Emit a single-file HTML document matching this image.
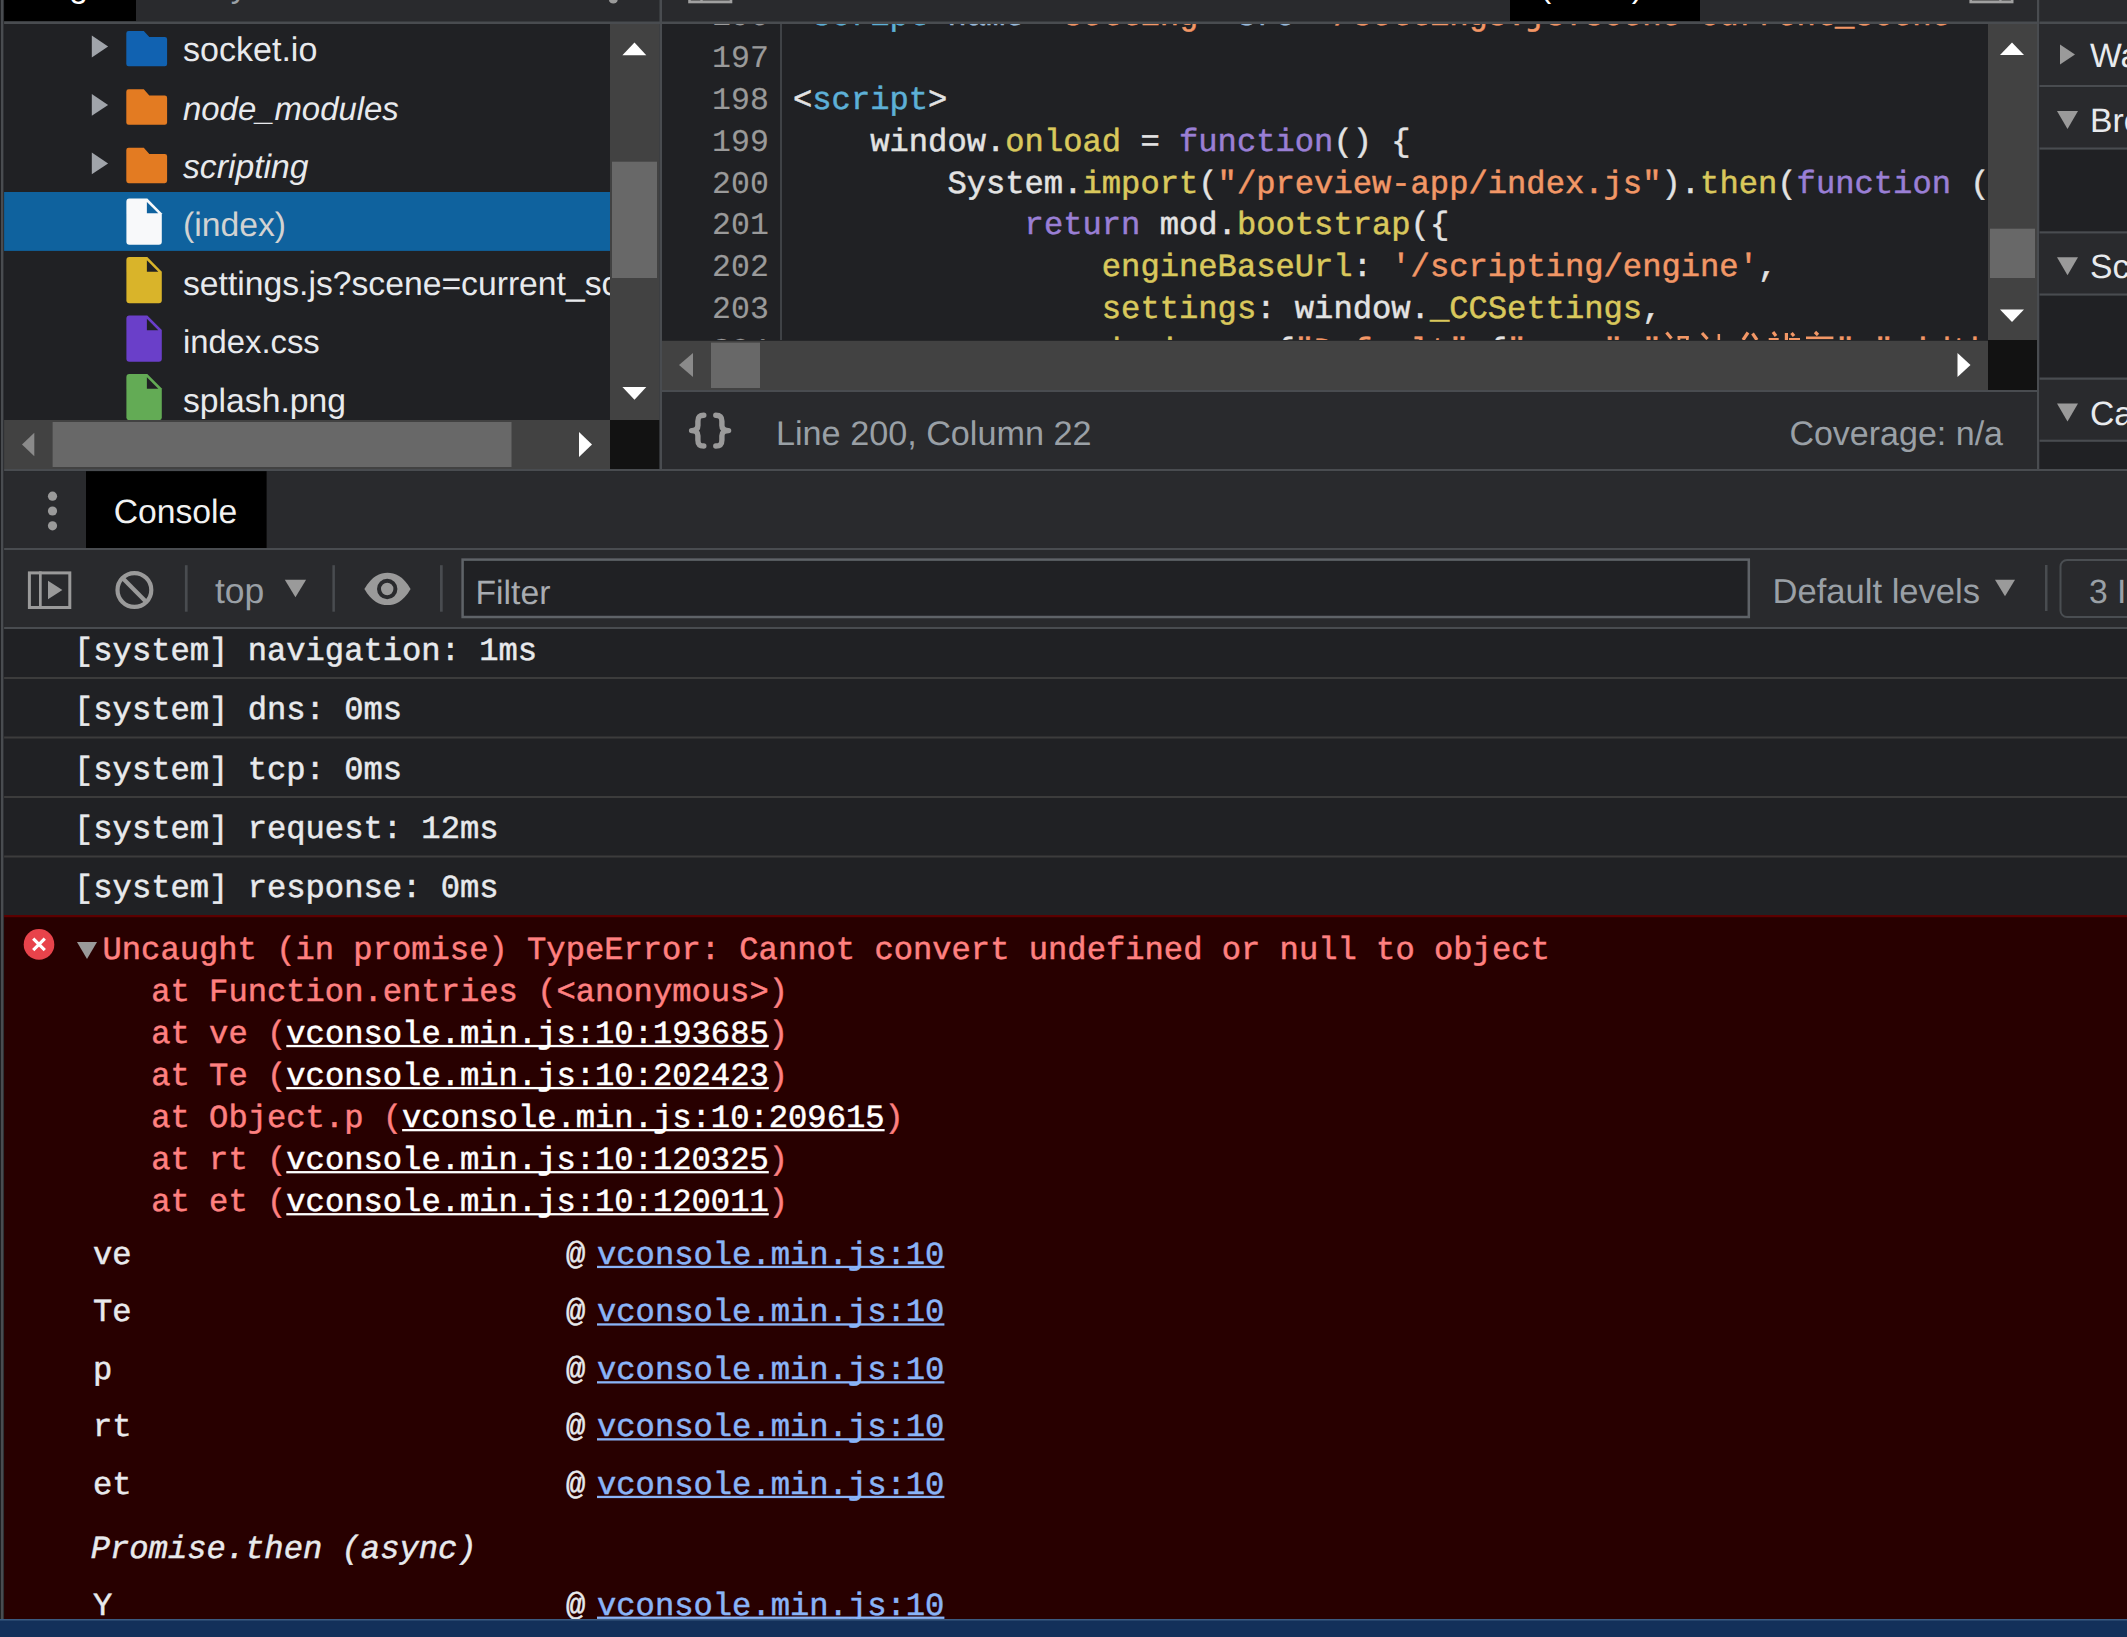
<!DOCTYPE html>
<html><head><meta charset="utf-8"><style>
html,body{margin:0;padding:0;background:#202124;overflow:hidden;width:2127px;height:1637px}
svg{display:block}
text{text-rendering:geometricPrecision}
</style></head><body>
<svg width="2127" height="1637" viewBox="0 0 2127 1637">
<rect x="0.00" y="0.00" width="2127.00" height="1637.00" fill="#202124" />
<rect x="0.00" y="0.00" width="660.00" height="22.00" fill="#292a2d" />
<rect x="4.00" y="0.00" width="132.00" height="21.00" fill="#000" />
<text x="28.00" y="-3.00" fill="#fff" font-family="'Liberation Sans', sans-serif" font-size="33.7" >Page</text>
<text x="159.50" y="-3.00" fill="#9aa0a6" font-family="'Liberation Sans', sans-serif" font-size="33.7" >Filesystem</text>
<circle cx="613.3" cy="-1" r="4.5" fill="#9a9a9a"/>
<rect x="0.00" y="21.50" width="660.00" height="2.50" fill="#494c50" />
<rect x="3.00" y="24.00" width="607.00" height="396.00" fill="#202124" />
<svg x="3" y="24" width="607" height="396" overflow="hidden"><g transform="translate(-3,-24)">
<path d="M91.8,35.60 L91.8,57.40 L108.1,46.50 Z" fill="#a0a4aa" />
<path d="M126.3,33.20 Q126.3,30.90 128.6,30.90 L143.8,30.90 L149.3,37.05 L164.8,37.05 Q167.1,37.05 167.1,39.35 L167.1,63.95 Q167.1,66.25 164.8,66.25 L128.6,66.25 Q126.3,66.25 126.3,63.95 Z" fill="#1162b1" />
<text x="183.00" y="61.05" fill="#e8eaed" font-family="'Liberation Sans', sans-serif" font-size="34.05" >socket.io</text>
<path d="M91.8,94.05 L91.8,115.85 L108.1,104.95 Z" fill="#a0a4aa" />
<path d="M126.3,91.65 Q126.3,89.35 128.6,89.35 L143.8,89.35 L149.3,95.50 L164.8,95.50 Q167.1,95.50 167.1,97.80 L167.1,122.40 Q167.1,124.70 164.8,124.70 L128.6,124.70 Q126.3,124.70 126.3,122.40 Z" fill="#e37b22" />
<text x="183.00" y="119.50" fill="#e8eaed" font-family="'Liberation Sans', sans-serif" font-size="32.9" font-style="italic">node_modules</text>
<path d="M91.8,152.50 L91.8,174.30 L108.1,163.40 Z" fill="#a0a4aa" />
<path d="M126.3,150.10 Q126.3,147.80 128.6,147.80 L143.8,147.80 L149.3,153.95 L164.8,153.95 Q167.1,153.95 167.1,156.25 L167.1,180.85 Q167.1,183.15 164.8,183.15 L128.6,183.15 Q126.3,183.15 126.3,180.85 Z" fill="#e37b22" />
<text x="183.00" y="177.95" fill="#e8eaed" font-family="'Liberation Sans', sans-serif" font-size="33.7" font-style="italic">scripting</text>
<rect x="3.00" y="192.00" width="607.00" height="58.90" fill="#0f629e" />
<path d="M126.4,201.60 Q126.4,198.60 129.4,198.60 L147.3,198.60 L161.8,213.20 L161.8,241.80 Q161.8,244.80 158.8,244.80 L129.4,244.80 Q126.4,244.80 126.4,241.80 Z" fill="#f8f9fa" />
<path d="M146.9,201.90 L146.9,213.30 L158.3,213.30 Z" fill="#0f629e" />
<text x="183.00" y="236.40" fill="#d2d2d2" font-family="'Liberation Sans', sans-serif" font-size="33.7" >(index)</text>
<path d="M126.4,260.05 Q126.4,257.05 129.4,257.05 L147.3,257.05 L161.8,271.65 L161.8,300.25 Q161.8,303.25 158.8,303.25 L129.4,303.25 Q126.4,303.25 126.4,300.25 Z" fill="#d9b42a" />
<path d="M146.9,260.35 L146.9,271.75 L158.3,271.75 Z" fill="#202124" />
<text x="183.00" y="294.85" fill="#e8eaed" font-family="'Liberation Sans', sans-serif" font-size="33.7" >settings.js?scene=current_scene</text>
<path d="M126.4,318.50 Q126.4,315.50 129.4,315.50 L147.3,315.50 L161.8,330.10 L161.8,358.70 Q161.8,361.70 158.8,361.70 L129.4,361.70 Q126.4,361.70 126.4,358.70 Z" fill="#6a3fc9" />
<path d="M146.9,318.80 L146.9,330.20 L158.3,330.20 Z" fill="#202124" />
<text x="183.00" y="353.30" fill="#e8eaed" font-family="'Liberation Sans', sans-serif" font-size="32.8" >index.css</text>
<path d="M126.4,376.95 Q126.4,373.95 129.4,373.95 L147.3,373.95 L161.8,388.55 L161.8,417.15 Q161.8,420.15 158.8,420.15 L129.4,420.15 Q126.4,420.15 126.4,417.15 Z" fill="#63ab55" />
<path d="M146.9,377.25 L146.9,388.65 L158.3,388.65 Z" fill="#202124" />
<text x="183.00" y="411.75" fill="#e8eaed" font-family="'Liberation Sans', sans-serif" font-size="33.7" >splash.png</text>
</g></svg>
<rect x="610.00" y="24.00" width="49.50" height="396.00" fill="#424242" />
<rect x="612.00" y="161.70" width="45.00" height="116.30" fill="#686868" />
<path d="M634.5,42.5 L646.3,55.2 L622.4,55.2 Z" fill="#fff" />
<path d="M622.4,387 L646.3,387 L634.5,399.7 Z" fill="#fff" />
<rect x="3.00" y="420.00" width="607.00" height="49.50" fill="#424242" />
<rect x="52.60" y="422.00" width="458.90" height="45.00" fill="#686868" />
<path d="M34.3,432.7 L34.3,456.2 L22,444.45 Z" fill="#8a8a8a" />
<path d="M579,432 L579,457 L592,444.5 Z" fill="#fff" />
<rect x="610.00" y="420.00" width="49.50" height="49.50" fill="#121212" />
<rect x="659.50" y="0.00" width="2.50" height="469.50" fill="#494c50" />
<rect x="662.00" y="0.00" width="1375.00" height="22.00" fill="#292a2d" />
<rect x="1510.00" y="0.00" width="190.00" height="21.00" fill="#000" />
<text x="1540.00" y="-3.00" fill="#fff" font-family="'Liberation Sans', sans-serif" font-size="33.7" >(index)</text>
<rect x="689.5" y="-20" width="41.5" height="22" fill="#555" stroke="#a0a0a0" stroke-width="2.6"/>
<rect x="700.30" y="-20.00" width="2.40" height="22.00" fill="#a0a0a0" />
<rect x="1970.7" y="-20" width="41.5" height="22" fill="#555" stroke="#a0a0a0" stroke-width="2.6"/>
<rect x="1999.20" y="-20.00" width="2.40" height="22.00" fill="#a0a0a0" />
<rect x="662.00" y="21.50" width="1375.00" height="2.50" fill="#494c50" />
<rect x="662.00" y="24.00" width="1375.00" height="316.00" fill="#202124" />
<rect x="780.00" y="24.00" width="2.00" height="316.00" fill="#3f4246" />
<svg x="662" y="24" width="118" height="316" overflow="hidden"><g transform="translate(-662,-24)">
<text x="768.8" y="25.15" fill="#9a9a9a" stroke="#9a9a9a" stroke-width="0.15" font-family="'Liberation Mono', monospace" font-size="31.5" text-anchor="end">196</text>
<text x="768.8" y="67.00" fill="#9a9a9a" stroke="#9a9a9a" stroke-width="0.15" font-family="'Liberation Mono', monospace" font-size="31.5" text-anchor="end">197</text>
<text x="768.8" y="108.85" fill="#9a9a9a" stroke="#9a9a9a" stroke-width="0.15" font-family="'Liberation Mono', monospace" font-size="31.5" text-anchor="end">198</text>
<text x="768.8" y="150.70" fill="#9a9a9a" stroke="#9a9a9a" stroke-width="0.15" font-family="'Liberation Mono', monospace" font-size="31.5" text-anchor="end">199</text>
<text x="768.8" y="192.55" fill="#9a9a9a" stroke="#9a9a9a" stroke-width="0.15" font-family="'Liberation Mono', monospace" font-size="31.5" text-anchor="end">200</text>
<text x="768.8" y="234.40" fill="#9a9a9a" stroke="#9a9a9a" stroke-width="0.15" font-family="'Liberation Mono', monospace" font-size="31.5" text-anchor="end">201</text>
<text x="768.8" y="276.25" fill="#9a9a9a" stroke="#9a9a9a" stroke-width="0.15" font-family="'Liberation Mono', monospace" font-size="31.5" text-anchor="end">202</text>
<text x="768.8" y="318.10" fill="#9a9a9a" stroke="#9a9a9a" stroke-width="0.15" font-family="'Liberation Mono', monospace" font-size="31.5" text-anchor="end">203</text>
<text x="768.8" y="359.95" fill="#9a9a9a" stroke="#9a9a9a" stroke-width="0.15" font-family="'Liberation Mono', monospace" font-size="31.5" text-anchor="end">204</text>
</g></svg>
<svg x="782" y="24" width="1206" height="316" overflow="hidden"><g transform="translate(-782,-24)">
<text x="793.00" y="25.15" fill="#e3e3e3" stroke="#e3e3e3" stroke-width="0.5" font-family="'Liberation Mono', monospace" font-size="32.17" xml:space="preserve" style="white-space:pre">&lt;</text>
<text x="812.30" y="25.15" fill="#5db0d7" stroke="#5db0d7" stroke-width="0.5" font-family="'Liberation Mono', monospace" font-size="32.17" xml:space="preserve" style="white-space:pre">script</text>
<text x="928.10" y="25.15" fill="#e3e3e3" stroke="#e3e3e3" stroke-width="0.5" font-family="'Liberation Mono', monospace" font-size="32.17" xml:space="preserve" style="white-space:pre">&#160;</text>
<text x="947.40" y="25.15" fill="#9bbbdc" stroke="#9bbbdc" stroke-width="0.5" font-family="'Liberation Mono', monospace" font-size="32.17" xml:space="preserve" style="white-space:pre">name</text>
<text x="1024.60" y="25.15" fill="#e3e3e3" stroke="#e3e3e3" stroke-width="0.5" font-family="'Liberation Mono', monospace" font-size="32.17" xml:space="preserve" style="white-space:pre">=</text>
<text x="1043.90" y="25.15" fill="#f29766" stroke="#f29766" stroke-width="0.5" font-family="'Liberation Mono', monospace" font-size="32.17" xml:space="preserve" style="white-space:pre">"setting"</text>
<text x="1217.60" y="25.15" fill="#e3e3e3" stroke="#e3e3e3" stroke-width="0.5" font-family="'Liberation Mono', monospace" font-size="32.17" xml:space="preserve" style="white-space:pre">&#160;</text>
<text x="1236.90" y="25.15" fill="#9bbbdc" stroke="#9bbbdc" stroke-width="0.5" font-family="'Liberation Mono', monospace" font-size="32.17" xml:space="preserve" style="white-space:pre">src</text>
<text x="1294.80" y="25.15" fill="#e3e3e3" stroke="#e3e3e3" stroke-width="0.5" font-family="'Liberation Mono', monospace" font-size="32.17" xml:space="preserve" style="white-space:pre">=</text>
<text x="1314.10" y="25.15" fill="#f29766" stroke="#f29766" stroke-width="0.5" font-family="'Liberation Mono', monospace" font-size="32.17" xml:space="preserve" style="white-space:pre">"/settings.js?scene=current_scene"</text>
<text x="1970.30" y="25.15" fill="#e3e3e3" stroke="#e3e3e3" stroke-width="0.5" font-family="'Liberation Mono', monospace" font-size="32.17" xml:space="preserve" style="white-space:pre">&gt;&lt;/</text>
<text x="2028.20" y="25.15" fill="#5db0d7" stroke="#5db0d7" stroke-width="0.5" font-family="'Liberation Mono', monospace" font-size="32.17" xml:space="preserve" style="white-space:pre">script</text>
<text x="2144.00" y="25.15" fill="#e3e3e3" stroke="#e3e3e3" stroke-width="0.5" font-family="'Liberation Mono', monospace" font-size="32.17" xml:space="preserve" style="white-space:pre">&gt;</text>
<text x="793.00" y="108.85" fill="#e3e3e3" stroke="#e3e3e3" stroke-width="0.5" font-family="'Liberation Mono', monospace" font-size="32.17" xml:space="preserve" style="white-space:pre">&lt;</text>
<text x="812.30" y="108.85" fill="#5db0d7" stroke="#5db0d7" stroke-width="0.5" font-family="'Liberation Mono', monospace" font-size="32.17" xml:space="preserve" style="white-space:pre">script</text>
<text x="928.10" y="108.85" fill="#e3e3e3" stroke="#e3e3e3" stroke-width="0.5" font-family="'Liberation Mono', monospace" font-size="32.17" xml:space="preserve" style="white-space:pre">&gt;</text>
<text x="793.00" y="150.70" fill="#e3e3e3" stroke="#e3e3e3" stroke-width="0.5" font-family="'Liberation Mono', monospace" font-size="32.17" xml:space="preserve" style="white-space:pre">&#160;&#160;&#160;&#160;window.</text>
<text x="1005.30" y="150.70" fill="#d9c85c" stroke="#d9c85c" stroke-width="0.5" font-family="'Liberation Mono', monospace" font-size="32.17" xml:space="preserve" style="white-space:pre">onload</text>
<text x="1121.10" y="150.70" fill="#e3e3e3" stroke="#e3e3e3" stroke-width="0.5" font-family="'Liberation Mono', monospace" font-size="32.17" xml:space="preserve" style="white-space:pre">&#160;=&#160;</text>
<text x="1179.00" y="150.70" fill="#9a7fd5" stroke="#9a7fd5" stroke-width="0.5" font-family="'Liberation Mono', monospace" font-size="32.17" xml:space="preserve" style="white-space:pre">function</text>
<text x="1333.40" y="150.70" fill="#e3e3e3" stroke="#e3e3e3" stroke-width="0.5" font-family="'Liberation Mono', monospace" font-size="32.17" xml:space="preserve" style="white-space:pre">()&#160;{</text>
<text x="793.00" y="192.55" fill="#e3e3e3" stroke="#e3e3e3" stroke-width="0.5" font-family="'Liberation Mono', monospace" font-size="32.17" xml:space="preserve" style="white-space:pre">&#160;&#160;&#160;&#160;&#160;&#160;&#160;&#160;System.</text>
<text x="1082.50" y="192.55" fill="#d9c85c" stroke="#d9c85c" stroke-width="0.5" font-family="'Liberation Mono', monospace" font-size="32.17" xml:space="preserve" style="white-space:pre">import</text>
<text x="1198.30" y="192.55" fill="#e3e3e3" stroke="#e3e3e3" stroke-width="0.5" font-family="'Liberation Mono', monospace" font-size="32.17" xml:space="preserve" style="white-space:pre">(</text>
<text x="1217.60" y="192.55" fill="#f29766" stroke="#f29766" stroke-width="0.5" font-family="'Liberation Mono', monospace" font-size="32.17" xml:space="preserve" style="white-space:pre">"/preview-app/index.js"</text>
<text x="1661.50" y="192.55" fill="#e3e3e3" stroke="#e3e3e3" stroke-width="0.5" font-family="'Liberation Mono', monospace" font-size="32.17" xml:space="preserve" style="white-space:pre">).</text>
<text x="1700.10" y="192.55" fill="#d9c85c" stroke="#d9c85c" stroke-width="0.5" font-family="'Liberation Mono', monospace" font-size="32.17" xml:space="preserve" style="white-space:pre">then</text>
<text x="1777.30" y="192.55" fill="#e3e3e3" stroke="#e3e3e3" stroke-width="0.5" font-family="'Liberation Mono', monospace" font-size="32.17" xml:space="preserve" style="white-space:pre">(</text>
<text x="1796.60" y="192.55" fill="#9a7fd5" stroke="#9a7fd5" stroke-width="0.5" font-family="'Liberation Mono', monospace" font-size="32.17" xml:space="preserve" style="white-space:pre">function</text>
<text x="1951.00" y="192.55" fill="#e3e3e3" stroke="#e3e3e3" stroke-width="0.5" font-family="'Liberation Mono', monospace" font-size="32.17" xml:space="preserve" style="white-space:pre">&#160;(mod)&#160;{</text>
<text x="793.00" y="234.40" fill="#e3e3e3" stroke="#e3e3e3" stroke-width="0.5" font-family="'Liberation Mono', monospace" font-size="32.17" xml:space="preserve" style="white-space:pre">&#160;&#160;&#160;&#160;&#160;&#160;&#160;&#160;&#160;&#160;&#160;&#160;</text>
<text x="1024.60" y="234.40" fill="#9a7fd5" stroke="#9a7fd5" stroke-width="0.5" font-family="'Liberation Mono', monospace" font-size="32.17" xml:space="preserve" style="white-space:pre">return</text>
<text x="1140.40" y="234.40" fill="#e3e3e3" stroke="#e3e3e3" stroke-width="0.5" font-family="'Liberation Mono', monospace" font-size="32.17" xml:space="preserve" style="white-space:pre">&#160;mod.</text>
<text x="1236.90" y="234.40" fill="#d9c85c" stroke="#d9c85c" stroke-width="0.5" font-family="'Liberation Mono', monospace" font-size="32.17" xml:space="preserve" style="white-space:pre">bootstrap</text>
<text x="1410.60" y="234.40" fill="#e3e3e3" stroke="#e3e3e3" stroke-width="0.5" font-family="'Liberation Mono', monospace" font-size="32.17" xml:space="preserve" style="white-space:pre">({</text>
<text x="793.00" y="276.25" fill="#e3e3e3" stroke="#e3e3e3" stroke-width="0.5" font-family="'Liberation Mono', monospace" font-size="32.17" xml:space="preserve" style="white-space:pre">&#160;&#160;&#160;&#160;&#160;&#160;&#160;&#160;&#160;&#160;&#160;&#160;&#160;&#160;&#160;&#160;</text>
<text x="1101.80" y="276.25" fill="#d9c85c" stroke="#d9c85c" stroke-width="0.5" font-family="'Liberation Mono', monospace" font-size="32.17" xml:space="preserve" style="white-space:pre">engineBaseUrl</text>
<text x="1352.70" y="276.25" fill="#e3e3e3" stroke="#e3e3e3" stroke-width="0.5" font-family="'Liberation Mono', monospace" font-size="32.17" xml:space="preserve" style="white-space:pre">:&#160;</text>
<text x="1391.30" y="276.25" fill="#f29766" stroke="#f29766" stroke-width="0.5" font-family="'Liberation Mono', monospace" font-size="32.17" xml:space="preserve" style="white-space:pre">'/scripting/engine'</text>
<text x="1758.00" y="276.25" fill="#e3e3e3" stroke="#e3e3e3" stroke-width="0.5" font-family="'Liberation Mono', monospace" font-size="32.17" xml:space="preserve" style="white-space:pre">,</text>
<text x="793.00" y="318.10" fill="#e3e3e3" stroke="#e3e3e3" stroke-width="0.5" font-family="'Liberation Mono', monospace" font-size="32.17" xml:space="preserve" style="white-space:pre">&#160;&#160;&#160;&#160;&#160;&#160;&#160;&#160;&#160;&#160;&#160;&#160;&#160;&#160;&#160;&#160;</text>
<text x="1101.80" y="318.10" fill="#d9c85c" stroke="#d9c85c" stroke-width="0.5" font-family="'Liberation Mono', monospace" font-size="32.17" xml:space="preserve" style="white-space:pre">settings</text>
<text x="1256.20" y="318.10" fill="#e3e3e3" stroke="#e3e3e3" stroke-width="0.5" font-family="'Liberation Mono', monospace" font-size="32.17" xml:space="preserve" style="white-space:pre">:&#160;window.</text>
<text x="1429.90" y="318.10" fill="#d9c85c" stroke="#d9c85c" stroke-width="0.5" font-family="'Liberation Mono', monospace" font-size="32.17" xml:space="preserve" style="white-space:pre">_CCSettings</text>
<text x="1642.20" y="318.10" fill="#e3e3e3" stroke="#e3e3e3" stroke-width="0.5" font-family="'Liberation Mono', monospace" font-size="32.17" xml:space="preserve" style="white-space:pre">,</text>
<text x="793.00" y="359.95" fill="#e3e3e3" stroke="#e3e3e3" stroke-width="0.5" font-family="'Liberation Mono', monospace" font-size="32.17" xml:space="preserve" style="white-space:pre">&#160;&#160;&#160;&#160;&#160;&#160;&#160;&#160;&#160;&#160;&#160;&#160;&#160;&#160;&#160;&#160;</text>
<text x="1101.80" y="359.95" fill="#d9c85c" stroke="#d9c85c" stroke-width="0.5" font-family="'Liberation Mono', monospace" font-size="32.17" xml:space="preserve" style="white-space:pre">designs</text>
<text x="1236.90" y="359.95" fill="#e3e3e3" stroke="#e3e3e3" stroke-width="0.5" font-family="'Liberation Mono', monospace" font-size="32.17" xml:space="preserve" style="white-space:pre">:&#160;{</text>
<text x="1294.80" y="359.95" fill="#f29766" stroke="#f29766" stroke-width="0.5" font-family="'Liberation Mono', monospace" font-size="32.17" xml:space="preserve" style="white-space:pre">"Default"</text>
<text x="1468.50" y="359.95" fill="#e3e3e3" stroke="#e3e3e3" stroke-width="0.5" font-family="'Liberation Mono', monospace" font-size="32.17" xml:space="preserve" style="white-space:pre">:{</text>
<text x="1507.10" y="359.95" fill="#f29766" stroke="#f29766" stroke-width="0.5" font-family="'Liberation Mono', monospace" font-size="32.17" xml:space="preserve" style="white-space:pre">"name"</text>
<text x="1622.90" y="359.95" fill="#e3e3e3" stroke="#e3e3e3" stroke-width="0.5" font-family="'Liberation Mono', monospace" font-size="32.17" xml:space="preserve" style="white-space:pre">:</text>
<text x="1642.20" y="359.95" fill="#f29766" stroke="#f29766" stroke-width="0.5" font-family="'Liberation Mono', monospace" font-size="32.17" xml:space="preserve" style="white-space:pre">"</text>
<text x="1835.50" y="359.95" fill="#f29766" stroke="#f29766" stroke-width="0.5" font-family="'Liberation Mono', monospace" font-size="32.17" xml:space="preserve" style="white-space:pre">"</text>
<text x="1854.80" y="359.95" fill="#e3e3e3" stroke="#e3e3e3" stroke-width="0.5" font-family="'Liberation Mono', monospace" font-size="32.17" xml:space="preserve" style="white-space:pre">,</text>
<text x="1874.10" y="359.95" fill="#f29766" stroke="#f29766" stroke-width="0.5" font-family="'Liberation Mono', monospace" font-size="32.17" xml:space="preserve" style="white-space:pre">"width"</text>
<text x="2009.20" y="359.95" fill="#e3e3e3" stroke="#e3e3e3" stroke-width="0.5" font-family="'Liberation Mono', monospace" font-size="32.17" xml:space="preserve" style="white-space:pre">:</text>
<path d="M1666.5,332.5 L1671.5,338.5" stroke="#f29766" stroke-width="3.2" fill="none"/>
<path d="M1702,333 L1707.5,339" stroke="#f29766" stroke-width="3.2" fill="none"/>
<path d="M1748,332.5 L1743,340" stroke="#f29766" stroke-width="3.2" fill="none"/>
<path d="M1752.5,333.5 L1757,340" stroke="#f29766" stroke-width="3.2" fill="none"/>
<path d="M1773,332 L1776,336" stroke="#f29766" stroke-width="3.2" fill="none"/>
<path d="M1791.5,333 L1794,336" stroke="#f29766" stroke-width="3.2" fill="none"/>
<path d="M1815,332 L1818,335" stroke="#f29766" stroke-width="3.2" fill="none"/>
<rect x="1677.7" y="336" width="11" height="2.6" fill="#f29766"/>
<rect x="1677.7" y="336" width="2.6" height="5" fill="#f29766"/>
<rect x="1686" y="336" width="2.6" height="5" fill="#f29766"/>
<rect x="1717.6" y="334" width="2.5" height="6" fill="#f29766"/>
<rect x="1768.7" y="338" width="10" height="2.5" fill="#f29766"/>
<rect x="1784.8" y="333" width="3.2" height="7" fill="#f29766"/>
<rect x="1789" y="338" width="11" height="2.5" fill="#f29766"/>
<rect x="1806" y="336.5" width="27.4" height="2.6" fill="#f29766"/>
</g></svg>
<rect x="1988.00" y="24.00" width="49.00" height="316.00" fill="#424242" />
<rect x="1990.00" y="228.70" width="45.00" height="49.30" fill="#686868" />
<path d="M2012,42.5 L2024,55 L2000,55 Z" fill="#fff" />
<path d="M2000,309.5 L2024,309.5 L2012,322 Z" fill="#fff" />
<rect x="662.00" y="340.80" width="1326.00" height="49.20" fill="#424242" />
<rect x="711.00" y="342.60" width="49.00" height="45.40" fill="#686868" />
<path d="M693,353 L693,377 L679,365 Z" fill="#8a8a8a" />
<path d="M1957.5,353 L1957.5,377 L1970.5,365 Z" fill="#fff" />
<rect x="1988.00" y="340.00" width="49.00" height="50.00" fill="#121212" />
<rect x="662.00" y="390.00" width="1375.00" height="2.00" fill="#494c50" />
<rect x="662.00" y="392.00" width="1375.00" height="77.00" fill="#292a2d" />
<path d="M703.8,415.3 C699.3,415.3 697.9,417.3 697.9,421.3 L697.9,425.5 C697.9,428.8 695.8,430.6 691.6,430.6 C695.8,430.6 697.9,432.4 697.9,435.7 L697.9,440 C697.9,444 699.3,446 703.8,446" fill="none" stroke="#9a9a9a" stroke-width="5.4" stroke-linecap="round" stroke-linejoin="round"/>
<path d="M715.8,415.3 C720.3,415.3 721.9,417.3 721.9,421.3 L721.9,425.5 C721.9,428.8 724,430.6 728.6,430.6 C724,430.6 721.9,432.4 721.9,435.7 L721.9,440 C721.9,444 720.3,446 715.8,446" fill="none" stroke="#9a9a9a" stroke-width="5.4" stroke-linecap="round" stroke-linejoin="round"/>
<text x="776.00" y="445.30" fill="#9aa0a6" font-family="'Liberation Sans', sans-serif" font-size="34.2" >Line 200, Column 22</text>
<text x="2003.00" y="444.50" fill="#9aa0a6" font-family="'Liberation Sans', sans-serif" font-size="34.0" text-anchor="end">Coverage: n/a</text>
<rect x="2037.00" y="0.00" width="2.50" height="469.50" fill="#494c50" />
<rect x="2039.50" y="0.00" width="87.50" height="22.00" fill="#292a2d" />
<rect x="2039.50" y="21.50" width="87.50" height="2.50" fill="#494c50" />
<rect x="2039.50" y="24.00" width="87.50" height="445.00" fill="#202124" />
<rect x="2039.50" y="24.00" width="87.50" height="61.00" fill="#292a2d" />
<rect x="2039.50" y="85.00" width="87.50" height="2.20" fill="#494c50" />
<path d="M2060,44.50 L2060,64.50 L2075,54.50 Z" fill="#9a9a9a" />
<text x="2090.00" y="67.40" fill="#e8eaed" font-family="'Liberation Sans', sans-serif" font-size="33.7" >Watch</text>
<rect x="2039.50" y="87.20" width="87.50" height="60.20" fill="#292a2d" />
<rect x="2039.50" y="147.40" width="87.50" height="2.20" fill="#494c50" />
<path d="M2057,111.10 L2078,111.10 L2067.5,129.00 Z" fill="#9a9a9a" />
<text x="2090.00" y="132.00" fill="#e8eaed" font-family="'Liberation Sans', sans-serif" font-size="33.7" >Breakpoints</text>
<rect x="2039.50" y="233.50" width="87.50" height="59.90" fill="#292a2d" />
<rect x="2039.50" y="293.40" width="87.50" height="2.20" fill="#494c50" />
<path d="M2057,257.25 L2078,257.25 L2067.5,275.15 Z" fill="#9a9a9a" />
<text x="2090.00" y="278.00" fill="#e8eaed" font-family="'Liberation Sans', sans-serif" font-size="33.7" >Scope</text>
<rect x="2039.50" y="379.80" width="87.50" height="59.80" fill="#292a2d" />
<rect x="2039.50" y="439.60" width="87.50" height="2.20" fill="#494c50" />
<path d="M2057,403.50 L2078,403.50 L2067.5,421.40 Z" fill="#9a9a9a" />
<text x="2090.00" y="424.70" fill="#e8eaed" font-family="'Liberation Sans', sans-serif" font-size="33.7" >Call Stack</text>
<rect x="2039.50" y="231.30" width="87.50" height="2.20" fill="#494c50" />
<rect x="2039.50" y="377.50" width="87.50" height="2.30" fill="#494c50" />
<rect x="0.00" y="469.00" width="2127.00" height="2.20" fill="#494c50" />
<rect x="0.00" y="471.20" width="2127.00" height="76.80" fill="#292a2d" />
<rect x="86.00" y="471.20" width="180.60" height="76.80" fill="#000" />
<circle cx="52.5" cy="496.2" r="4.6" fill="#9a9a9a"/>
<circle cx="52.5" cy="511" r="4.6" fill="#9a9a9a"/>
<circle cx="52.5" cy="525.8" r="4.6" fill="#9a9a9a"/>
<text x="113.70" y="522.50" fill="#f2f2f2" font-family="'Liberation Sans', sans-serif" font-size="33.7" >Console</text>
<rect x="0.00" y="548.00" width="2127.00" height="2.00" fill="#494c50" />
<rect x="0.00" y="550.00" width="2127.00" height="77.00" fill="#292a2d" />
<rect x="29.4" y="572.9" width="40.4" height="34.6" fill="none" stroke="#9a9a9a" stroke-width="3"/>
<rect x="39.00" y="571.40" width="2.70" height="37.60" fill="#9a9a9a" />
<path d="M48,580.7 L48,599.3 L62.4,590 Z" fill="#9a9a9a" />
<circle cx="134.4" cy="590" r="16.9" fill="none" stroke="#9a9a9a" stroke-width="4.2"/>
<line x1="122.5" y1="578.1" x2="146.3" y2="601.9" stroke="#9a9a9a" stroke-width="4.2"/>
<rect x="184.90" y="565.20" width="2.70" height="46.50" fill="#494c50" />
<text x="215.00" y="603.00" fill="#9aa0a6" font-family="'Liberation Sans', sans-serif" font-size="35.5" >top</text>
<path d="M284.8,579.7 L306.1,579.7 L295.45,597.2 Z" fill="#9a9a9a" />
<rect x="332.40" y="565.20" width="2.50" height="46.50" fill="#494c50" />
<path d="M364.4,589 C372,576 380,572.8 387.5,572.8 C395,572.8 403,576 410.6,589 C403,602 395,605.1 387.5,605.1 C380,605.1 372,602 364.4,589 Z" fill="#9a9a9a" />
<circle cx="387.2" cy="589" r="8.2" fill="none" stroke="#292a2d" stroke-width="4"/>
<rect x="440.00" y="565.20" width="2.70" height="46.50" fill="#494c50" />
<rect x="462.6" y="559.6" width="1286.2" height="57.4" fill="#202124" stroke="#5f6368" stroke-width="2.5"/>
<text x="475.50" y="604.00" fill="#a8acb1" font-family="'Liberation Sans', sans-serif" font-size="33.7" >Filter</text>
<text x="1772.50" y="602.50" fill="#9aa0a6" font-family="'Liberation Sans', sans-serif" font-size="34.6" >Default levels</text>
<path d="M1995,579.7 L2015,579.7 L2005,596.3 Z" fill="#9a9a9a" />
<rect x="2045.00" y="565.00" width="2.50" height="46.00" fill="#494c50" />
<rect x="2060.5" y="560" width="120" height="57" rx="6.5" fill="none" stroke="#4a4e52" stroke-width="2"/>
<text x="2089.00" y="602.50" fill="#9aa0a6" font-family="'Liberation Sans', sans-serif" font-size="33.7" >3 Issues</text>
<rect x="0.00" y="627.00" width="2127.00" height="2.00" fill="#494c50" />
<rect x="3.00" y="629.00" width="2124.00" height="990.00" fill="#202124" />
<rect x="4.00" y="677.00" width="2123.00" height="2.00" fill="#3c3c3c" />
<rect x="4.00" y="736.50" width="2123.00" height="2.00" fill="#3c3c3c" />
<rect x="4.00" y="796.00" width="2123.00" height="2.00" fill="#3c3c3c" />
<rect x="4.00" y="855.50" width="2123.00" height="2.00" fill="#3c3c3c" />
<text x="74.00" y="660.10" fill="#e8eaed" font-family="'Liberation Mono', monospace" font-size="32.17" stroke="#e8eaed" stroke-width="0.5" xml:space="preserve" style="white-space:pre">[system]&#160;navigation:&#160;1ms</text>
<text x="74.00" y="719.30" fill="#e8eaed" font-family="'Liberation Mono', monospace" font-size="32.17" stroke="#e8eaed" stroke-width="0.5" xml:space="preserve" style="white-space:pre">[system]&#160;dns:&#160;0ms</text>
<text x="74.00" y="778.60" fill="#e8eaed" font-family="'Liberation Mono', monospace" font-size="32.17" stroke="#e8eaed" stroke-width="0.5" xml:space="preserve" style="white-space:pre">[system]&#160;tcp:&#160;0ms</text>
<text x="74.00" y="837.80" fill="#e8eaed" font-family="'Liberation Mono', monospace" font-size="32.17" stroke="#e8eaed" stroke-width="0.5" xml:space="preserve" style="white-space:pre">[system]&#160;request:&#160;12ms</text>
<text x="74.00" y="897.10" fill="#e8eaed" font-family="'Liberation Mono', monospace" font-size="32.17" stroke="#e8eaed" stroke-width="0.5" xml:space="preserve" style="white-space:pre">[system]&#160;response:&#160;0ms</text>
<rect x="3.00" y="915.00" width="2124.00" height="704.00" fill="#280000" />
<rect x="3.00" y="915.00" width="2124.00" height="2.20" fill="#5c0000" />
<circle cx="39" cy="944.4" r="15.3" fill="#e8434b"/>
<path d="M33.2,938.6 L44.8,950.2 M44.8,938.6 L33.2,950.2" stroke="#fff" stroke-width="3.2"/>
<path d="M77,942 L97,942 L87,959 Z" fill="#9a9a9a" />
<text x="102.50" y="958.80" fill="#ff8080" font-family="'Liberation Mono', monospace" font-size="32.17" stroke="#ff8080" stroke-width="0.5" xml:space="preserve" style="white-space:pre">Uncaught&#160;(in&#160;promise)&#160;TypeError:&#160;Cannot&#160;convert&#160;undefined&#160;or&#160;null&#160;to&#160;object</text>
<text x="74.00" y="1000.85" fill="#ff8080" font-family="'Liberation Mono', monospace" font-size="32.17" stroke="#ff8080" stroke-width="0.5" xml:space="preserve" style="white-space:pre">&#160;&#160;&#160;&#160;at&#160;Function.entries&#160;(&lt;anonymous&gt;)</text>
<text x="74.00" y="1042.90" fill="#ff8080" font-family="'Liberation Mono', monospace" font-size="32.17" stroke="#ff8080" stroke-width="0.5" xml:space="preserve" style="white-space:pre">&#160;&#160;&#160;&#160;at&#160;ve&#160;(</text>
<text x="286.30" y="1042.90" fill="#ffffff" font-family="'Liberation Mono', monospace" font-size="32.17" stroke="#ffffff" stroke-width="0.5" xml:space="preserve" style="white-space:pre">vconsole.min.js:10:193685</text>
<rect x="286.30" y="1044.90" width="482.50" height="2.30" fill="#ffffff" />
<text x="768.80" y="1042.90" fill="#ff8080" font-family="'Liberation Mono', monospace" font-size="32.17" stroke="#ff8080" stroke-width="0.5" xml:space="preserve" style="white-space:pre">)</text>
<text x="74.00" y="1084.95" fill="#ff8080" font-family="'Liberation Mono', monospace" font-size="32.17" stroke="#ff8080" stroke-width="0.5" xml:space="preserve" style="white-space:pre">&#160;&#160;&#160;&#160;at&#160;Te&#160;(</text>
<text x="286.30" y="1084.95" fill="#ffffff" font-family="'Liberation Mono', monospace" font-size="32.17" stroke="#ffffff" stroke-width="0.5" xml:space="preserve" style="white-space:pre">vconsole.min.js:10:202423</text>
<rect x="286.30" y="1086.95" width="482.50" height="2.30" fill="#ffffff" />
<text x="768.80" y="1084.95" fill="#ff8080" font-family="'Liberation Mono', monospace" font-size="32.17" stroke="#ff8080" stroke-width="0.5" xml:space="preserve" style="white-space:pre">)</text>
<text x="74.00" y="1127.00" fill="#ff8080" font-family="'Liberation Mono', monospace" font-size="32.17" stroke="#ff8080" stroke-width="0.5" xml:space="preserve" style="white-space:pre">&#160;&#160;&#160;&#160;at&#160;Object.p&#160;(</text>
<text x="402.10" y="1127.00" fill="#ffffff" font-family="'Liberation Mono', monospace" font-size="32.17" stroke="#ffffff" stroke-width="0.5" xml:space="preserve" style="white-space:pre">vconsole.min.js:10:209615</text>
<rect x="402.10" y="1129.00" width="482.50" height="2.30" fill="#ffffff" />
<text x="884.60" y="1127.00" fill="#ff8080" font-family="'Liberation Mono', monospace" font-size="32.17" stroke="#ff8080" stroke-width="0.5" xml:space="preserve" style="white-space:pre">)</text>
<text x="74.00" y="1169.05" fill="#ff8080" font-family="'Liberation Mono', monospace" font-size="32.17" stroke="#ff8080" stroke-width="0.5" xml:space="preserve" style="white-space:pre">&#160;&#160;&#160;&#160;at&#160;rt&#160;(</text>
<text x="286.30" y="1169.05" fill="#ffffff" font-family="'Liberation Mono', monospace" font-size="32.17" stroke="#ffffff" stroke-width="0.5" xml:space="preserve" style="white-space:pre">vconsole.min.js:10:120325</text>
<rect x="286.30" y="1171.05" width="482.50" height="2.30" fill="#ffffff" />
<text x="768.80" y="1169.05" fill="#ff8080" font-family="'Liberation Mono', monospace" font-size="32.17" stroke="#ff8080" stroke-width="0.5" xml:space="preserve" style="white-space:pre">)</text>
<text x="74.00" y="1211.10" fill="#ff8080" font-family="'Liberation Mono', monospace" font-size="32.17" stroke="#ff8080" stroke-width="0.5" xml:space="preserve" style="white-space:pre">&#160;&#160;&#160;&#160;at&#160;et&#160;(</text>
<text x="286.30" y="1211.10" fill="#ffffff" font-family="'Liberation Mono', monospace" font-size="32.17" stroke="#ffffff" stroke-width="0.5" xml:space="preserve" style="white-space:pre">vconsole.min.js:10:120011</text>
<rect x="286.30" y="1213.10" width="482.50" height="2.30" fill="#ffffff" />
<text x="768.80" y="1211.10" fill="#ff8080" font-family="'Liberation Mono', monospace" font-size="32.17" stroke="#ff8080" stroke-width="0.5" xml:space="preserve" style="white-space:pre">)</text>
<text x="93.00" y="1263.80" fill="#e8eaed" font-family="'Liberation Mono', monospace" font-size="32.17" stroke="#e8eaed" stroke-width="0.5" >ve</text>
<text x="566.00" y="1263.80" fill="#e8eaed" font-family="'Liberation Mono', monospace" font-size="32.17" stroke="#e8eaed" stroke-width="0.5" >@</text>
<text x="597.00" y="1263.80" fill="#8ab4f8" font-family="'Liberation Mono', monospace" font-size="32.17" stroke="#8ab4f8" stroke-width="0.5" >vconsole.min.js:10</text>
<rect x="597.00" y="1265.80" width="347.40" height="2.30" fill="#8ab4f8" />
<text x="93.00" y="1321.30" fill="#e8eaed" font-family="'Liberation Mono', monospace" font-size="32.17" stroke="#e8eaed" stroke-width="0.5" >Te</text>
<text x="566.00" y="1321.30" fill="#e8eaed" font-family="'Liberation Mono', monospace" font-size="32.17" stroke="#e8eaed" stroke-width="0.5" >@</text>
<text x="597.00" y="1321.30" fill="#8ab4f8" font-family="'Liberation Mono', monospace" font-size="32.17" stroke="#8ab4f8" stroke-width="0.5" >vconsole.min.js:10</text>
<rect x="597.00" y="1323.30" width="347.40" height="2.30" fill="#8ab4f8" />
<text x="93.00" y="1379.20" fill="#e8eaed" font-family="'Liberation Mono', monospace" font-size="32.17" stroke="#e8eaed" stroke-width="0.5" >p</text>
<text x="566.00" y="1379.20" fill="#e8eaed" font-family="'Liberation Mono', monospace" font-size="32.17" stroke="#e8eaed" stroke-width="0.5" >@</text>
<text x="597.00" y="1379.20" fill="#8ab4f8" font-family="'Liberation Mono', monospace" font-size="32.17" stroke="#8ab4f8" stroke-width="0.5" >vconsole.min.js:10</text>
<rect x="597.00" y="1381.20" width="347.40" height="2.30" fill="#8ab4f8" />
<text x="93.00" y="1436.20" fill="#e8eaed" font-family="'Liberation Mono', monospace" font-size="32.17" stroke="#e8eaed" stroke-width="0.5" >rt</text>
<text x="566.00" y="1436.20" fill="#e8eaed" font-family="'Liberation Mono', monospace" font-size="32.17" stroke="#e8eaed" stroke-width="0.5" >@</text>
<text x="597.00" y="1436.20" fill="#8ab4f8" font-family="'Liberation Mono', monospace" font-size="32.17" stroke="#8ab4f8" stroke-width="0.5" >vconsole.min.js:10</text>
<rect x="597.00" y="1438.20" width="347.40" height="2.30" fill="#8ab4f8" />
<text x="93.00" y="1493.80" fill="#e8eaed" font-family="'Liberation Mono', monospace" font-size="32.17" stroke="#e8eaed" stroke-width="0.5" >et</text>
<text x="566.00" y="1493.80" fill="#e8eaed" font-family="'Liberation Mono', monospace" font-size="32.17" stroke="#e8eaed" stroke-width="0.5" >@</text>
<text x="597.00" y="1493.80" fill="#8ab4f8" font-family="'Liberation Mono', monospace" font-size="32.17" stroke="#8ab4f8" stroke-width="0.5" >vconsole.min.js:10</text>
<rect x="597.00" y="1495.80" width="347.40" height="2.30" fill="#8ab4f8" />
<text x="93.00" y="1614.60" fill="#e8eaed" font-family="'Liberation Mono', monospace" font-size="32.17" stroke="#e8eaed" stroke-width="0.5" >Y</text>
<text x="566.00" y="1614.60" fill="#e8eaed" font-family="'Liberation Mono', monospace" font-size="32.17" stroke="#e8eaed" stroke-width="0.5" >@</text>
<text x="597.00" y="1614.60" fill="#8ab4f8" font-family="'Liberation Mono', monospace" font-size="32.17" stroke="#8ab4f8" stroke-width="0.5" >vconsole.min.js:10</text>
<rect x="597.00" y="1616.60" width="347.40" height="2.30" fill="#8ab4f8" />
<text x="90.70" y="1557.70" fill="#e8eaed" font-family="'Liberation Mono', monospace" font-size="32.17" stroke="#e8eaed" stroke-width="0.5" font-style="italic" xml:space="preserve" style="white-space:pre">Promise.then (async)</text>
<rect x="0.00" y="0.00" width="4.10" height="1619.00" fill="#1f2023" />
<rect x="1.00" y="0.00" width="2.40" height="1619.00" fill="#494c50" />
<rect x="0.00" y="1619.00" width="2127.00" height="18.00" fill="#13305a" />
<rect x="0.00" y="1619.00" width="2127.00" height="1.50" fill="#3b5a80" />
</svg>
</body></html>
